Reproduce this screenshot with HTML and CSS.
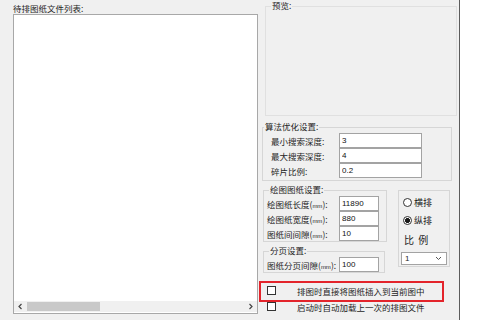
FILE: index.html
```html
<!DOCTYPE html>
<html lang="zh-CN">
<head>
  <meta charset="UTF-8" />
  <meta name="viewport" content="width=device-width, initial-scale=1.0" />
  <title>排图设置</title>
  <link rel="stylesheet" href="styles.css">
</head>
<body>
  <div class="window">
    <div class="files">
      <div class="caption">待排图纸文件列表:</div>
      <div class="filelist">
        <div class="hscroll">
          <svg class="arrow" width="7" height="7" viewBox="0 0 7 7"><path d="M4.5 1 L2 3.5 L4.5 6" fill="none" stroke="#444" stroke-width="1.2"/></svg>
          <div class="track"><div class="thumb"></div></div>
          <svg class="arrow" width="7" height="7" viewBox="0 0 7 7"><path d="M2.5 1 L5 3.5 L2.5 6" fill="none" stroke="#444" stroke-width="1.2"/></svg>
        </div>
      </div>
    </div>

    <div class="options">
      <fieldset class="group preview">
        <legend>预览:</legend>
      </fieldset>

      <fieldset class="group algo">
        <legend>算法优化设置:</legend>
        <div class="field"><label>最小搜索深度:</label><input class="num wide" value="3"></div>
        <div class="field"><label>最大搜索深度:</label><input class="num wide" value="4"></div>
        <div class="field"><label>碎片比例:</label><input class="num wide" value="0.2"></div>
      </fieldset>

      <div class="paper-row">
        <div class="paper-col">
          <fieldset class="group paper">
            <legend>绘图图纸设置:</legend>
            <div class="field"><label>绘图纸长度(<span class="unit">mm</span>):</label><input class="num" value="11890"></div>
            <div class="field"><label>绘图纸宽度(<span class="unit">mm</span>):</label><input class="num" value="880"></div>
            <div class="field"><label>图纸间间隙(<span class="unit">mm</span>):</label><input class="num" value="10"></div>
          </fieldset>
          <fieldset class="group paging">
            <legend>分页设置:</legend>
            <div class="field"><label>图纸分页间隙(<span class="unit">mm</span>):</label><input class="num" value="100"></div>
          </fieldset>
        </div>

        <div class="layout-box">
          <div class="radio"><span class="dot"></span>横排</div>
          <div class="radio"><span class="dot checked"></span>纵排</div>
          <div class="scale">比 例</div>
          <div class="select">
            <span>1</span>
            <svg width="7" height="5" viewBox="0 0 7 5"><path d="M1 1 L3.5 3.5 L6 1" fill="none" stroke="#555" stroke-width="1"/></svg>
          </div>
        </div>
      </div>

      <div class="check marked"><span class="box"></span>排图时直接将图纸插入到当前图中<span class="mark"></span></div>
      <div class="check"><span class="box"></span>启动时自动加载上一次的排图文件</div>
    </div>
  </div>
</body>
</html>
```

FILE: styles.css
```css
body {
  margin: 0;
  background: #fff;
  font-family: "Noto Sans CJK SC", "Noto Sans", sans-serif;
  font-size: 8.5px;
  color: #1e1e1e;
}
.window {
  display: flex;
  width: 459px;
  height: 320px;
  background: #f0f0f0;
  border-right: 1px solid #5c5c5c;
  overflow: hidden;
}

/* file list */
.files {
  display: flex;
  flex-direction: column;
  width: 245px;
  padding: 3px 0 0 13px;
}
.caption {
  line-height: 10px;
  height: 11px;
}
.filelist {
  display: flex;
  flex-direction: column;
  justify-content: flex-end;
  box-sizing: border-box;
  height: 300px;
  background: #fff;
  border: 1px solid #a8a8a8;
}
.hscroll {
  display: flex;
  align-items: center;
  height: 11px;
  margin-bottom: 1px;
  background: #f0f0f0;
}
.arrow {
  flex: none;
  margin: 0 3px;
}
.track {
  flex: 1;
  height: 9px;
}
.thumb {
  width: 73px;
  height: 9px;
  background: #c9c9c9;
}

/* right side */
.options {
  display: flex;
  flex-direction: column;
  width: 197px;
  margin-left: 4px;
}
.group {
  box-sizing: border-box;
  margin: 0;
  padding: 0;
  min-width: 0;
  border: 1px solid #d6d6d6;
}
.group legend {
  margin-left: 5px;
  padding: 0 1px 2px;
  line-height: 10px;
}
.preview {
  width: 192px;
  height: 116px;
  margin-left: 3px;
  border-color: #e0e0e0;
}
.algo {
  width: 190px;
  margin-top: 5px;
  padding-bottom: 2px;
}
.algo legend {
  margin-left: 1px;
}
.algo .field {
  padding-left: 8px;
}
.field {
  display: flex;
  align-items: center;
  height: 15px;
}
.field label {
  flex: 1;
  white-space: nowrap;
}
.unit {
  font-family: "Liberation Sans", sans-serif;
  font-size: 6px;
}
.num {
  box-sizing: border-box;
  width: 40px;
  height: 15px;
  margin: 0 7px 0 0;
  padding: 0 2px;
  border: 1px solid #a3a3a3;
  background: #fff;
  font-family: "Liberation Sans", sans-serif;
  font-size: 8px;
  color: #111;
}
.num.wide {
  width: 83px;
  margin-right: 29px;
}

.paper-row {
  display: flex;
  margin: 3px 0 0 1px;
  gap: 11px;
}
.paper-col {
  display: flex;
  flex-direction: column;
  width: 124px;
}
.paper .field,
.paging .field {
  padding-left: 3px;
}
.paging {
  width: 122px;
  margin-top: 3px;
}
.paging .num {
  margin-right: 5px;
}

.layout-box {
  display: flex;
  flex-direction: column;
  box-sizing: border-box;
  width: 52px;
  height: 77px;
  margin-top: 6px;
  padding: 5px 0 0 2px;
  border: 1px solid #d6d6d6;
}
.radio {
  display: flex;
  align-items: center;
  gap: 2px;
  height: 12px;
  margin: 0 0 6px 2px;
  font-size: 9px;
}
.dot {
  box-sizing: border-box;
  width: 9px;
  height: 9px;
  border: 1px solid #333;
  border-radius: 50%;
  background: #fff;
}
.dot.checked {
  background: radial-gradient(circle, #1a1a1a 0 2.2px, #fff 2.7px);
}
.scale {
  margin: 2px 0 0 3px;
  line-height: 12px;
  font-size: 10px;
  word-spacing: 2px;
}
.select {
  display: flex;
  align-items: center;
  justify-content: space-between;
  box-sizing: border-box;
  width: 46px;
  height: 13px;
  margin-top: 6px;
  padding: 0 4px 0 3px;
  background: #fff;
  border: 1px solid #a3a3a3;
  font-family: "Liberation Sans", sans-serif;
  font-size: 8px;
}

.check {
  position: relative;
  display: flex;
  align-items: center;
  gap: 21px;
  height: 13px;
  padding-left: 5px;
  margin-top: 3px;
}
.check.marked {
  margin-top: 11px;
}
.box {
  box-sizing: border-box;
  width: 9px;
  height: 9px;
  border: 1px solid #333;
  background: #fff;
}
.mark {
  position: absolute;
  left: -3px;
  top: -3px;
  width: 185px;
  height: 21px;
  box-sizing: border-box;
  border: 2px solid #e3242b;
}
```
